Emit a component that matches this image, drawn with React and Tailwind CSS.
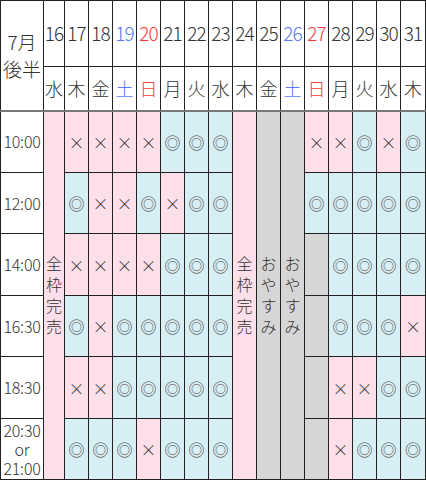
import React from "react";

const P = "bg-[#fddfea]";
const B = "bg-[#d7eef4]";
const G = "bg-[#d6d6d6]";

const days = [
  ["16", "水", ""], ["17", "木", ""], ["18", "金", ""], ["19", "土", "sat"], ["20", "日", "sun"],
  ["21", "月", ""], ["22", "火", ""], ["23", "水", ""], ["24", "木", ""], ["25", "金", ""],
  ["26", "土", "sat"], ["27", "日", "sun"], ["28", "月", ""], ["29", "火", ""], ["30", "水", ""], ["31", "木", ""],
];

// x = ×(pink), o = ◎(blue), g = gray empty
const rows = [
  { t: ["10:00"], a: "xxxxooo", b: "xxoxo" },
  { t: ["12:00"], a: "oxxoxoo", b: "ooooo" },
  { t: ["14:00"], a: "xxxxooo", b: "goooo" },
  { t: ["16:30"], a: "oxooooo", b: "gooox" },
  { t: ["18:30"], a: "xxooooo", b: "gxxoo" },
  { t: ["20:30", "or", "21:00"], a: "oooxooo", b: "gxooo" },
];

const heights = ["h-[62px]", "h-[61px]", "h-[62px]", "h-[61px]", "h-[62px]", "h-[61px]"];

const cellBase = "border border-[#222] p-0 text-center align-middle";

function Mark({ c }) {
  if (c === "x")
    return <td className={`${cellBase} ${P} text-[16px]`}>×</td>;
  if (c === "o")
    return <td className={`${cellBase} ${B} text-[16px]`}>◎</td>;
  return <td className={`${cellBase} ${G}`}></td>;
}

function Vertical({ text, bg }) {
  return (
    <td rowSpan={6} className={`${cellBase} ${bg}`}>
      <div className="flex flex-col items-center text-[16px] leading-[21px]">
        {text.split("").map((ch, i) => (
          <span key={i} className="block h-[21px]">{ch}</span>
        ))}
      </div>
    </td>
  );
}

function colorOf(k) {
  if (k === "sat") return "text-[#5a78f0]";
  if (k === "sun") return "text-[#f53c3c]";
  return "";
}

export default function App() {
  return (
    <div className="w-[426px] h-[480px] bg-white overflow-hidden font-['Noto_Sans_CJK_JP',sans-serif] font-light text-[#333]">
      <table className="border-collapse table-fixed w-[426px]">
        <colgroup>
          <col className="w-[43px]" />
          <col className="w-[21px]" />
          {Array.from({ length: 14 }).map((_, i) => (
            <col key={i} className="w-[24px]" />
          ))}
          <col className="w-[25px]" />
        </colgroup>
        <thead>
          <tr className="h-[66px]">
            <th
              rowSpan={2}
              className={`${cellBase} border-b-2 border-b-[#777] font-light text-[19px] leading-[27px]`}
            >
              7月
              <br />
              後半
            </th>
            {days.map(([d, , k]) => (
              <th key={d} className={`${cellBase} font-light text-[19px] tracking-[-0.8px] ${colorOf(k)}`}>
                {d}
              </th>
            ))}
          </tr>
          <tr className="h-[44px]">
            {days.map(([d, w, k]) => (
              <th
                key={d}
                className={`${cellBase} border-b-2 border-b-[#777] font-light text-[18px] ${colorOf(k)}`}
              >
                {w}
              </th>
            ))}
          </tr>
        </thead>
        <tbody>
          {rows.map((r, ri) => (
            <tr key={ri} className={heights[ri]}>
              <td className={`${cellBase} text-[16px] leading-[19px] tracking-[-0.2px]`}>
                {r.t.map((s, i) => (
                  <div key={i}>{s}</div>
                ))}
              </td>
              {ri === 0 && <Vertical text="全枠完売" bg={P} />}
              {r.a.split("").map((c, i) => (
                <Mark key={"a" + i} c={c} />
              ))}
              {ri === 0 && (
                <>
                  <Vertical text="全枠完売" bg={P} />
                  <Vertical text="おやすみ" bg={G} />
                  <Vertical text="おやすみ" bg={G} />
                </>
              )}
              {r.b.split("").map((c, i) => (
                <Mark key={"b" + i} c={c} />
              ))}
            </tr>
          ))}
        </tbody>
      </table>
    </div>
  );
}
